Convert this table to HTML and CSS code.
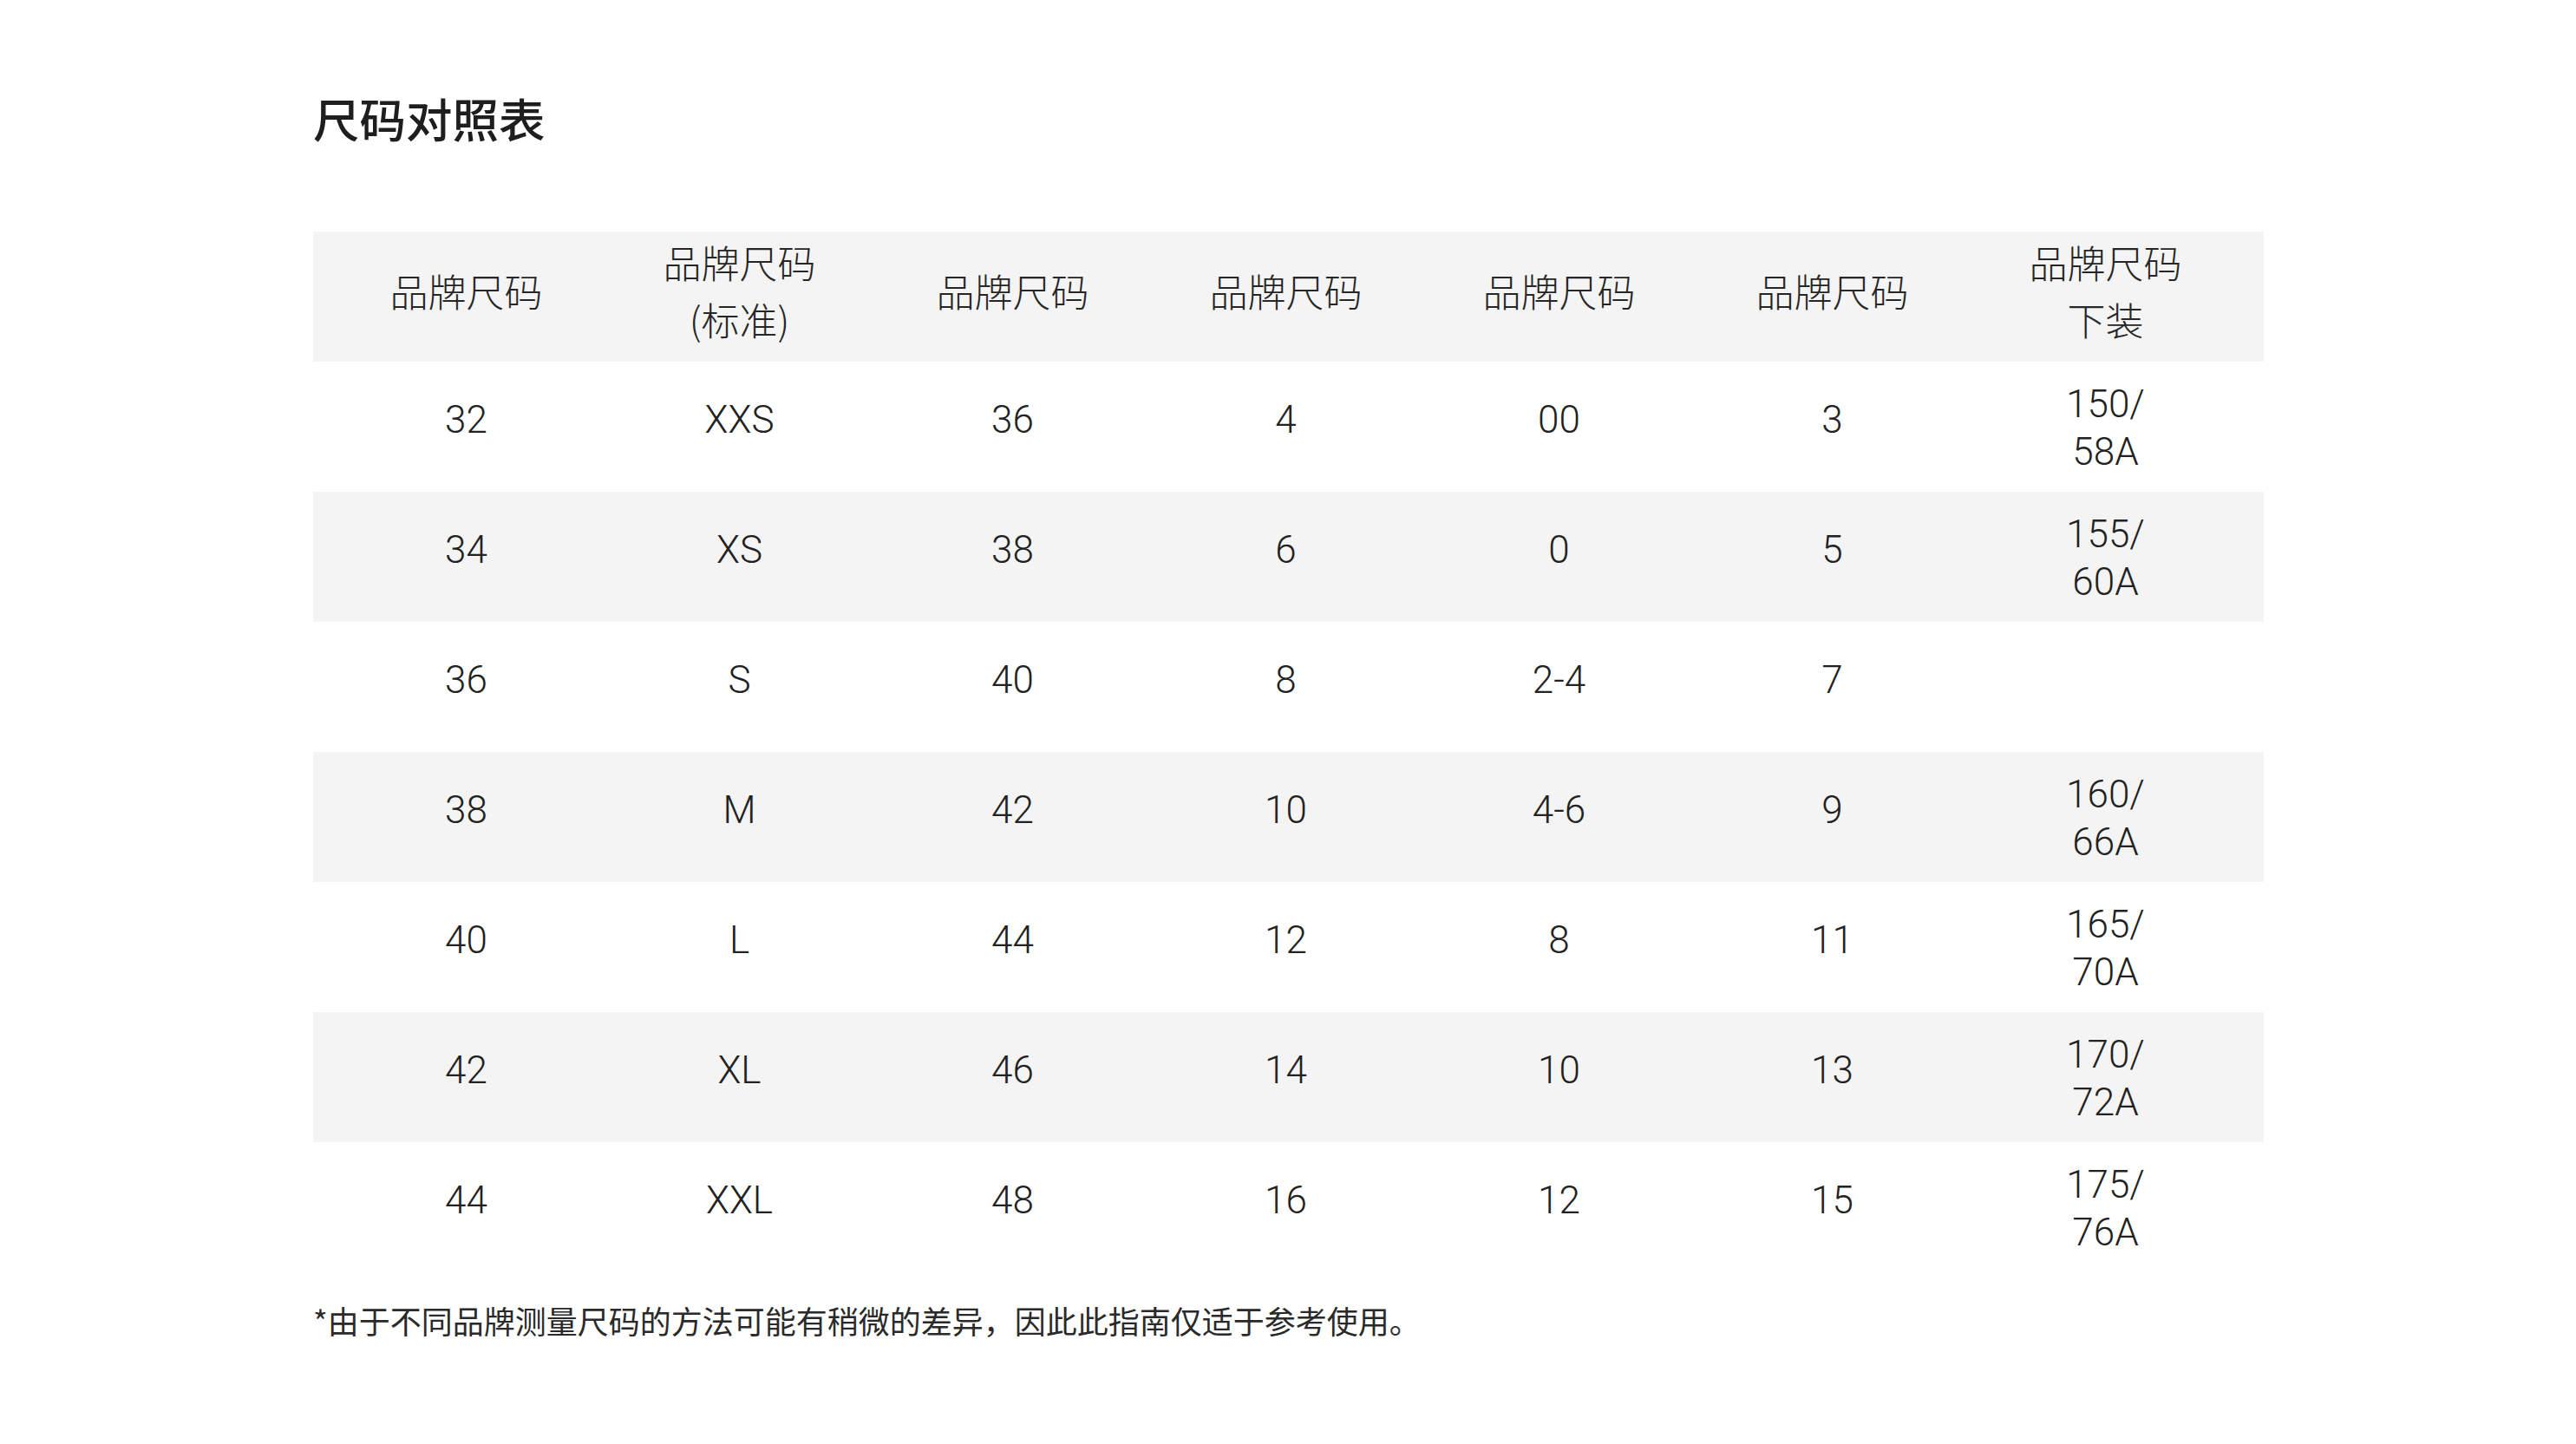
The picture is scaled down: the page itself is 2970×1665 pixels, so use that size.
FILE: index.html
```html
<!DOCTYPE html>
<html lang="zh-CN">
<head>
<meta charset="utf-8">
<title>尺码对照表</title>
<link rel="stylesheet" href="styles.css">
</head>
<body>
<main class="page">
  <h1 class="title">尺码对照表</h1>
  <div class="size-table">
    <div class="row head">
      <div class="cell">品牌尺码</div>
      <div class="cell">品牌尺码<br>(标准)</div>
      <div class="cell">品牌尺码</div>
      <div class="cell">品牌尺码</div>
      <div class="cell">品牌尺码</div>
      <div class="cell">品牌尺码</div>
      <div class="cell">品牌尺码<br>下装</div>
    </div>
    <div class="row">
      <div class="cell">32</div><div class="cell">XXS</div><div class="cell">36</div><div class="cell">4</div><div class="cell">00</div><div class="cell">3</div><div class="cell stack">150/<br>58A</div>
    </div>
    <div class="row alt">
      <div class="cell">34</div><div class="cell">XS</div><div class="cell">38</div><div class="cell">6</div><div class="cell">0</div><div class="cell">5</div><div class="cell stack">155/<br>60A</div>
    </div>
    <div class="row">
      <div class="cell">36</div><div class="cell">S</div><div class="cell">40</div><div class="cell">8</div><div class="cell">2-4</div><div class="cell">7</div><div class="cell"></div>
    </div>
    <div class="row alt">
      <div class="cell">38</div><div class="cell">M</div><div class="cell">42</div><div class="cell">10</div><div class="cell">4-6</div><div class="cell">9</div><div class="cell stack">160/<br>66A</div>
    </div>
    <div class="row">
      <div class="cell">40</div><div class="cell">L</div><div class="cell">44</div><div class="cell">12</div><div class="cell">8</div><div class="cell">11</div><div class="cell stack">165/<br>70A</div>
    </div>
    <div class="row alt">
      <div class="cell">42</div><div class="cell">XL</div><div class="cell">46</div><div class="cell">14</div><div class="cell">10</div><div class="cell">13</div><div class="cell stack">170/<br>72A</div>
    </div>
    <div class="row">
      <div class="cell">44</div><div class="cell">XXL</div><div class="cell">48</div><div class="cell">16</div><div class="cell">12</div><div class="cell">15</div><div class="cell stack">175/<br>76A</div>
    </div>
  </div>
  <p class="note">*由于不同品牌测量尺码的方法可能有稍微的差异，因此此指南仅适于参考使用。</p>
</main>
</body>
</html>
```
FILE: styles.css
```css
html, body {
  margin: 0;
  padding: 0;
  background: #ffffff;
}

body {
  font-family: "Roboto", "Noto Sans CJK SC", sans-serif;
  color: #222222;
}

.page {
  padding: 98px 0 0 361px;
  width: 2249px;
}

.title {
  margin: 0;
  font-family: "Noto Sans CJK SC", sans-serif;
  font-weight: 500;
  font-size: 53.5px;
  line-height: 76px;
  color: #1e1e1e;
  padding-left: 0;
}

.size-table {
  margin-top: 93px;
  width: 2249px;
}

.row {
  display: grid;
  grid-template-columns: repeat(7, 1fr);
  align-items: center;
  height: 150px;
  box-sizing: border-box;
  padding: 0 25px 16px 19px;
  font-size: 44px;
  font-weight: 300;
  line-height: 55px;
  text-align: center;
  background: #ffffff;
}

.cell.stack {
  padding-top: 20px;
}

.row.alt,
.row.head {
  background: #f4f4f4;
}

.row.head {
  font-family: "Noto Sans CJK SC", sans-serif;
  font-weight: 300;
  line-height: 66px;
  color: #262626;
  padding-bottom: 14px;
}

.note {
  margin: 29px 0 0 0;
  font-family: "Noto Sans CJK SC", sans-serif;
  font-size: 36px;
  line-height: 52px;
  color: #2a2a2a;
  padding-left: 0;
}
```
